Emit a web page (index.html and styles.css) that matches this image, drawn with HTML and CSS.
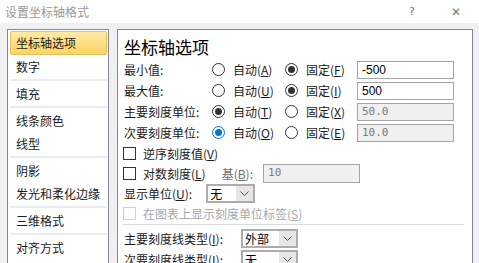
FILE: index.html
```html
<!DOCTYPE html>
<html lang="zh-CN">
  <head>
    <meta charset="utf-8" />
    <title>设置坐标轴格式</title>
    <link rel="stylesheet" href="styles.css">
  </head>
  <body>
    <header class="titlebar">
      <span class="title">设置坐标轴格式</span>
      <span class="help">?</span>
      <span class="close">✕</span>
    </header>
    <div class="dialog">
      <ul class="nav">
        <li class="active">坐标轴选项</li>
        <li>数字</li>
        <li class="sep"></li>
        <li>填充</li>
        <li class="sep"></li>
        <li>线条颜色</li>
        <li>线型</li>
        <li class="sep"></li>
        <li>阴影</li>
        <li>发光和柔化边缘</li>
        <li class="sep"></li>
        <li>三维格式</li>
        <li class="sep"></li>
        <li>对齐方式</li>
      </ul>

      <section class="panel">
        <h1>坐标轴选项</h1>

        <div class="value-row">
          <span>最小值:</span>
          <label><span class="radio"></span>自动(<u>A</u>)</label>
          <label><span class="radio on"></span>固定(<u>F</u>)</label>
          <span class="field">-500</span>
        </div>
        <div class="value-row">
          <span>最大值:</span>
          <label><span class="radio"></span>自动(<u>U</u>)</label>
          <label><span class="radio on"></span>固定(<u>I</u>)</label>
          <span class="field">500</span>
        </div>
        <div class="value-row">
          <span>主要刻度单位:</span>
          <label><span class="radio on"></span>自动(<u>T</u>)</label>
          <label><span class="radio"></span>固定(<u>X</u>)</label>
          <span class="field off">50.0</span>
        </div>
        <div class="value-row">
          <span>次要刻度单位:</span>
          <label><span class="radio on focus"></span>自动(<u>O</u>)</label>
          <label><span class="radio"></span>固定(<u>E</u>)</label>
          <span class="field off">10.0</span>
        </div>

        <div class="check-row">
          <label><span class="box"></span>逆序刻度值(<u>V</u>)</label>
        </div>
        <div class="check-row">
          <label><span class="box"></span>对数刻度(<u>L</u>)</label>
          <span class="base">基(<u>B</u>):</span>
          <span class="field off base-field">10</span>
        </div>
        <div class="check-row">
          <span>显示单位(<u>U</u>):</span>
          <span class="select unit-select"><span class="val">无</span><span class="arrow"><svg width="9" height="5" viewBox="0 0 9 5"><path d="M0.5 0.5 L4.5 4.5 L8.5 0.5" fill="none" stroke="#555" /></svg></span></span>
        </div>
        <div class="check-row disabled">
          <label><span class="box"></span>在图表上显示刻度单位标签(<u>S</u>)</label>
        </div>

        <hr class="rule" />

        <div class="tick-row">
          <span>主要刻度线类型(<u>I</u>):</span>
          <span class="select tick-select"><span class="val">外部</span><span class="arrow"><svg width="9" height="5" viewBox="0 0 9 5"><path d="M0.5 0.5 L4.5 4.5 L8.5 0.5" fill="none" stroke="#555" /></svg></span></span>
        </div>
        <div class="tick-row">
          <span>次要刻度线类型(<u>I</u>):</span>
          <span class="select tick-select"><span class="val">无</span><span class="arrow"><svg width="9" height="5" viewBox="0 0 9 5"><path d="M0.5 0.5 L4.5 4.5 L8.5 0.5" fill="none" stroke="#555" /></svg></span></span>
        </div>
      </section>
    </div>
  </body>
</html>
```

FILE: styles.css
```css
body {
  margin: 0;
  font-family: "Noto Sans CJK SC", "Noto Sans", sans-serif;
  font-size: 12px;
  color: #1a1a1a;
  background-color: #f0f0f0;
  overflow: hidden;
  height: 263px;
}

u {
  text-decoration-thickness: 1px;
  text-underline-offset: 1px;
}

.titlebar {
  display: flex;
  align-items: center;
  height: 23px;
  background-color: #fff;
  padding-left: 5px;
}

.title {
  flex: 1;
  color: #999;
  font-size: 12px;
}

.help {
  color: #777;
  font-family: "DejaVu Sans", sans-serif;
  font-size: 11px;
  margin-right: 36px;
}

.close {
  color: #777;
  font-family: "DejaVu Sans", sans-serif;
  font-size: 12px;
  margin-right: 18px;
}

.dialog {
  display: flex;
  gap: 8px;
  padding: 6px 6px 0 7px;
  height: 234px;
  overflow: hidden;
}

.nav {
  list-style: none;
  margin: 0;
  padding: 1px 1px 0 2px;
  width: 97px;
  height: 300px;
  background-color: #fff;
  border: 1px solid #828790;
  flex-shrink: 0;
}

.nav li {
  height: 23px;
  line-height: 23px;
  padding-left: 6px;
  white-space: nowrap;
}

.nav li.active {
  height: 22px;
  line-height: 22px;
  padding-left: 5px;
  background: linear-gradient(#fdeaa6, #fbd45f);
  border: 1px solid #e4c063;
  border-radius: 2px;
}

.nav li.sep {
  height: 2px;
  margin: 1px 0;
  padding: 0;
  background-color: #ebebf2;
}

.panel {
  flex: 1;
  height: 300px;
  background-color: #fff;
  border: 1px solid #828790;
  padding: 5px 4px 0 6px;
}

h1 {
  margin: 0;
  font-size: 17px;
  font-weight: normal;
  line-height: 24px;
  color: #000;
}

.value-row {
  display: grid;
  grid-template-columns: 88px 73px 72px 97px;
  align-items: center;
  height: 21px;
}

.value-row label,
.check-row label {
  display: flex;
  align-items: center;
}

.radio {
  display: inline-block;
  box-sizing: border-box;
  width: 13px;
  height: 13px;
  border: 1px solid #333;
  border-radius: 50%;
  margin-right: 8px;
  position: relative;
}

.radio.on::after {
  content: "";
  position: absolute;
  left: 2px;
  top: 2px;
  width: 7px;
  height: 7px;
  border-radius: 50%;
  background-color: #333;
}

.radio.focus {
  border-color: #0078d7;
}

.radio.focus::after {
  background-color: #0078d7;
}

.field {
  box-sizing: border-box;
  height: 18px;
  line-height: 16px;
  border: 1px solid #a5a5a5;
  padding-left: 4px;
  font-family: "Liberation Sans", sans-serif;
  font-size: 12px;
  color: #000;
}

.field.off {
  background-color: #f0f0f0;
  color: #7a7a7a;
  font-family: "DejaVu Sans Mono", monospace;
  font-size: 11px;
}

.check-row {
  display: flex;
  align-items: center;
  height: 20px;
}

.box {
  display: inline-block;
  box-sizing: border-box;
  width: 13px;
  height: 13px;
  border: 1px solid #333;
  margin-left: -1px;
  margin-right: 7px;
}

.base {
  margin-left: 16px;
  color: #6d6d6d;
}

.base-field {
  width: 97px;
  height: 19px;
  margin-left: 10px;
}

.disabled {
  color: #a8a8a8;
}

.disabled .box {
  border-color: #cfcfcf;
}

.select {
  box-sizing: border-box;
  display: flex;
  height: 19px;
  border: 2px solid #adadad;
  background-color: #fff;
}

.select .val {
  flex: 1;
  line-height: 15px;
  padding-left: 2px;
  color: #000;
}

.select .arrow {
  width: 17px;
  display: flex;
  align-items: center;
  justify-content: center;
  background-color: #e6e6e6;
}

.unit-select {
  width: 49px;
  margin-left: 14px;
}

.rule {
  border: 0;
  border-top: 1px solid #dcdcdc;
  margin: 1px 4px 3px -1px;
}

.tick-row {
  display: flex;
  align-items: center;
  height: 21px;
}

.tick-select {
  width: 57px;
  margin-left: 18px;
}
```
